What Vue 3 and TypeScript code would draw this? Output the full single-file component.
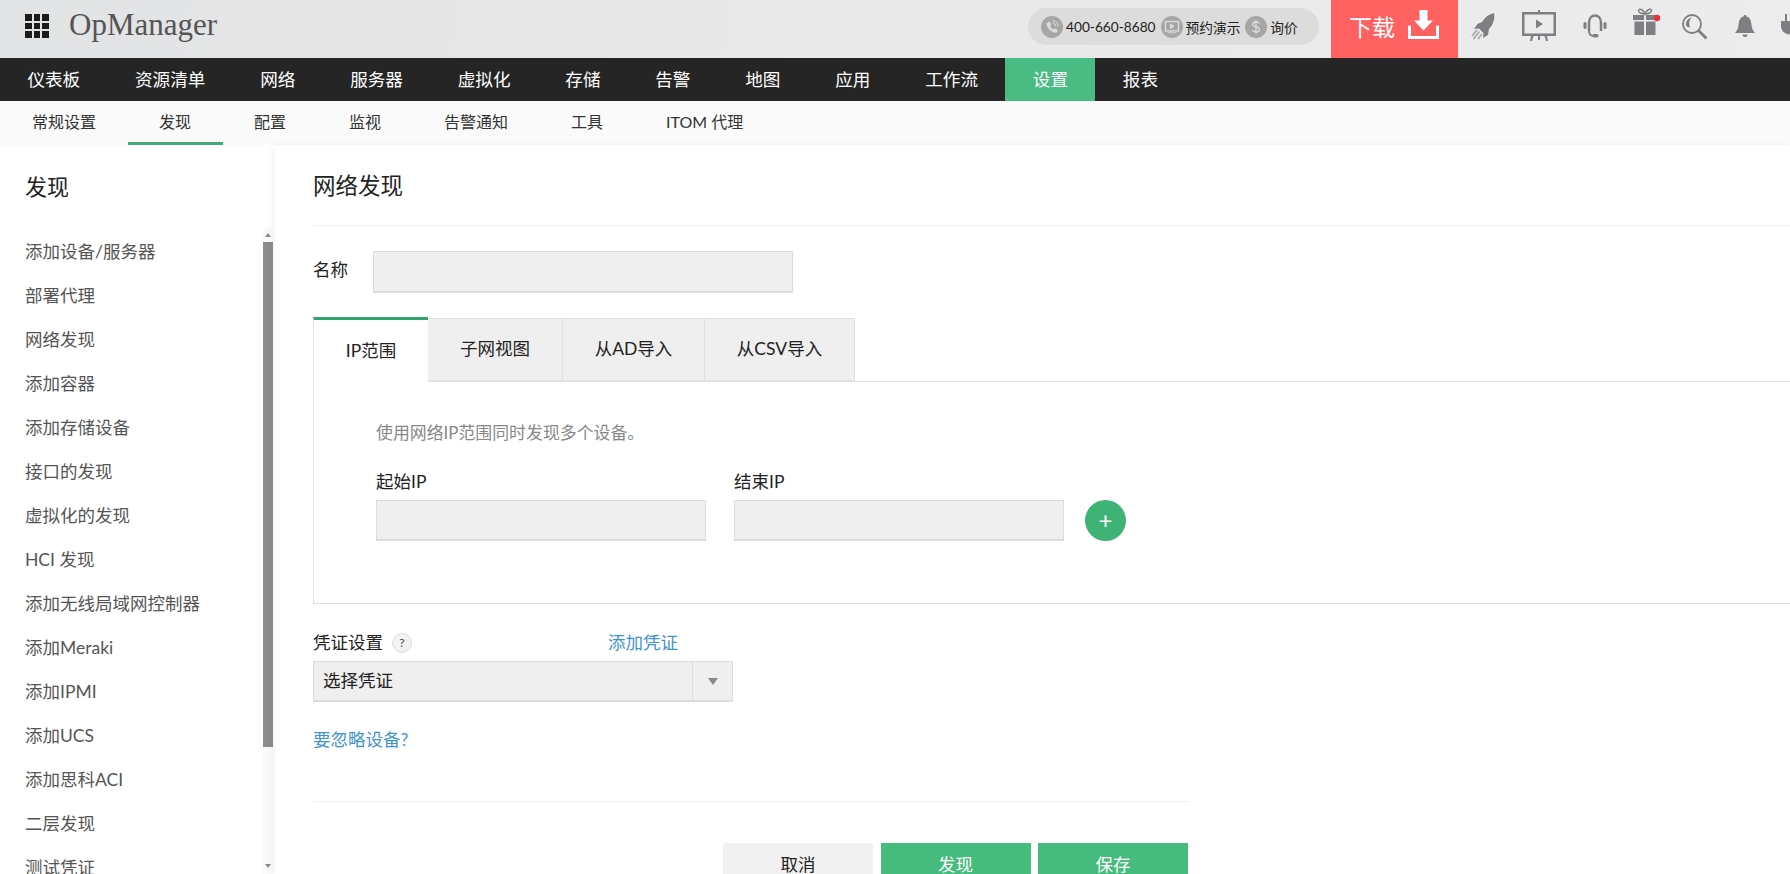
<style>
html, body {
  margin: 0;
  padding: 0;
  overflow: hidden;
  background: #fff;
}
</style>

<style scoped>
.app {
  width: 1790px;
  height: 874px;
  overflow: hidden;
  display: flex;
  flex-direction: column;
  font-family: Lato, "Noto Sans CJK SC", sans-serif;
  font-size: 17.5px;
  color: #222;
  background: #fff;
}

/* === Top bar === */
.topbar {
  height: 58px;
  flex: none;
  display: flex;
  align-items: center;
  background: linear-gradient(100deg, #e2e3e4, #e8e8e9 40%, #ececec);
}
.apps-grid {
  margin: 0 0 6px 25px;
  width: 24px;
  height: 24px;
  display: grid;
  grid-template-columns: repeat(3, 1fr);
  grid-template-rows: repeat(3, 1fr);
  gap: 2px;
}
.apps-grid i {
  background: #1c1c1c;
}
.logo {
  margin: 0 0 9px 20px;
  font-family: "Liberation Serif", serif;
  font-size: 31px;
  color: #555;
}
.contact {
  margin: 0 0 5px auto;
  height: 37px;
  width: 291px;
  box-sizing: border-box;
  padding-left: 13px;
  border-radius: 19px;
  background: #dcdcdc;
  display: flex;
  align-items: center;
  font-size: 13.7px;
  color: #222;
}
.contact svg {
  width: 22px;
  height: 22px;
  flex: none;
  margin-right: 3px;
}
.contact span {
  margin-right: 5px;
}
.download {
  margin-left: 12px;
  width: 127px;
  height: 58px;
  flex: none;
  background: #ff6161;
  color: #fff;
  font-size: 23px;
  display: flex;
  align-items: center;
  box-sizing: border-box;
  padding: 0 0 6px 18px;
}
.download svg {
  margin: 0 0 3px 13px;
}
.tools {
  width: 332px;
  flex: none;
  height: 58px;
  position: relative;
  overflow: hidden;
}
.tools svg {
  position: absolute;
  fill: #7d7f82;
}
.ic-rocket { left: 13px; top: 13px; }
.ic-screen { left: 64px; top: 10px; }
.ic-headset { left: 125px; top: 14px; }
.ic-gift { left: 175px; top: 8px; }
.ic-search { left: 224px; top: 14px; }
.ic-bell { left: 277px; top: 14px; }
.ic-plug { left: 323px; top: 14px; }

/* === Main nav === */
.mainnav {
  height: 43px;
  flex: none;
  display: flex;
  background: #252525;
  color: #fff;
}
.mainnav a {
  padding: 0 27.4px;
  line-height: 43px;
  font-size: 17.6px;
}
.mainnav a.active {
  background: #4abb82;
}

/* === Sub nav === */
.subnav {
  height: 44px;
  flex: none;
  box-sizing: border-box;
  display: flex;
  padding-left: 0.5px;
  background: #fafafa;
  font-size: 16px;
  color: #333;
}
.subnav a {
  padding: 0 31.5px;
  line-height: 41px;
  border-bottom: 3px solid transparent;
}
.subnav a.active {
  border-bottom-color: #45a97a;
}

/* === Body === */
.content {
  flex: 1;
  display: flex;
  min-height: 0;
}
.sidebar {
  width: 275px;
  flex: none;
  position: relative;
  background: #fff;
}
.side-title {
  height: 85px;
  padding-left: 25px;
  line-height: 84px;
  font-size: 22px;
  color: #222;
}
.side-row {
  height: 44px;
  line-height: 44px;
  padding-left: 25px;
  color: #555;
  white-space: nowrap;
}

/* Fake scrollbar, lies over the list */
.scroll-track {
  position: absolute;
  left: 263px;
  top: 83px;
  width: 10px;
  height: 646px;
  background: #fafafa;
}
.scroll-thumb {
  position: absolute;
  left: 0;
  top: 14px;
  width: 10px;
  height: 505px;
  background: #8c8c8c;
}
.scroll-up,
.scroll-down {
  position: absolute;
  left: 2px;
  width: 0;
  height: 0;
  border-left: 3px solid transparent;
  border-right: 3px solid transparent;
}
.scroll-up {
  top: 5px;
  border-bottom: 4px solid #8c8c8c;
}
.scroll-down {
  bottom: 6px;
  border-top: 4px solid #8c8c8c;
}

.main {
  flex: 1;
  min-width: 0;
  padding-left: 38px;
  background: #fff;
  box-shadow: -4px 0 7px rgba(0, 0, 0, .04);
  position: relative;
}
.page-title {
  height: 80px;
  line-height: 82px;
  font-size: 22.5px;
  border-bottom: 1px solid #eee;
}
.name-row {
  margin-top: 25px;
  display: flex;
  align-items: flex-start;
}
.name-row label {
  width: 60px;
  line-height: 38px;
}
.field {
  display: block;
  box-sizing: border-box;
  height: 42px;
  background: #efefef;
  border: 1px solid #dcdcdc;
  border-bottom-width: 2px;
  border-radius: 0;
  outline: none;
}
.name-row .field {
  width: 420px;
}

.tabs {
  margin-top: 24px;
  display: flex;
  align-items: flex-end;
  height: 64px;
  position: relative;
  z-index: 1;
}
.tab {
  box-sizing: border-box;
  height: 63px;
  text-align: center;
  line-height: 60px;
  background: #efefef;
  border: 1px solid #e0e0e0;
  border-left-width: 0;
  white-space: nowrap;
}
.tab.active {
  height: 65px;
  margin-bottom: -1px;
  line-height: 62px;
  background: #fff;
  border: 0;
  border-left: 1px solid #e0e0e0;
  border-top: 3px solid #2fa56d;
}
.panel {
  box-sizing: border-box;
  height: 223px;
  padding: 39px 0 0 62px;
  border: 1px solid #e0e0e0;
  border-right: 0;
}
.hint {
  line-height: 24px;
  color: #888;
  font-size: 16.9px;
}
.ip-row {
  margin-top: 25px;
  display: flex;
  align-items: flex-end;
}
.ip-col {
  width: 330px;
  margin-right: 28px;
}
.ip-col label {
  display: block;
  line-height: 24px;
  margin-bottom: 6px;
}
.ip-col .field {
  width: 330px;
  height: 41px;
}
.add-btn {
  width: 41px;
  height: 41px;
  margin-left: -7px;
  border-radius: 50%;
  background: #3fb275;
  color: #fff;
  font-size: 24px;
  line-height: 39px;
  text-align: center;
}

.cred-head {
  margin-top: 27px;
  width: 365px;
  height: 24px;
  line-height: 24px;
  display: flex;
  justify-content: space-between;
}
.cred-label {
  display: flex;
  align-items: center;
}
.help {
  width: 18px;
  height: 18px;
  margin-left: 9px;
  border: 1px solid #ddd;
  border-radius: 50%;
  background: #f2f2f2;
  font-size: 12px;
  line-height: 18px;
  text-align: center;
  color: #444;
}
.link {
  color: #3f94cc;
}
.select {
  margin-top: 6px;
  box-sizing: border-box;
  width: 420px;
  height: 41px;
  display: flex;
  line-height: 37px;
  background: #efefef;
  border: 1px solid #dcdcdc;
  border-bottom-width: 2px;
}
.select-value {
  flex: 1;
  padding-left: 9px;
}
.select-arrow {
  width: 39px;
  border-left: 1px solid #dcdcdc;
  display: flex;
  align-items: center;
  justify-content: center;
}
.select-arrow::before {
  content: '';
  border-left: 5px solid transparent;
  border-right: 5px solid transparent;
  border-top: 7px solid #888;
}
.ignore {
  display: block;
  margin-top: 26px;
  line-height: 24px;
}
.actions {
  margin-top: 49px;
  width: 875px;
  box-sizing: border-box;
  padding-top: 41px;
  border-top: 1px solid #eee;
  display: flex;
  justify-content: flex-end;
  gap: 7.5px;
}
.btn {
  width: 150px;
  height: 44px;
  line-height: 44px;
  text-align: center;
  color: #fff;
  background: #45bb7e;
}
.btn.cancel {
  background: #f1f1f1;
  color: #222;
}
</style>

<template>
  <div class="app">
    <!-- Top bar: logo, contact pill, download, tool icons -->
    <header class="topbar">
      <div class="apps-grid"><i v-for="n in 9" :key="n" /></div>
      <div class="logo">OpManager</div>

      <div class="contact">
        <svg viewBox="0 0 22 22">
          <circle cx="11" cy="11" r="11" fill="#a6a6a6" />
          <path d="M6.5 6.5c1-1 2-1 2.6 0l.8 1.6c.3.6.1 1-.4 1.5l-.5.5c.5 1.5 2 3 3.4 3.4l.6-.6c.5-.5 1-.6 1.5-.3l1.5.9c.8.5.8 1.5 0 2.4-1 1-2.4 1-4 .2-3-1.4-5-3.6-6-6.2-.5-1.4-.4-2.6.5-3.4z" fill="#dcdcdc" />
          <path d="M11.5 7a4 4 0 0 1 3.5 3.5M11.8 4.8a6 6 0 0 1 5.4 5.4" stroke="#dcdcdc" stroke-width="1" fill="none" />
        </svg>
        <span>400-660-8680</span>
        <svg viewBox="0 0 22 22">
          <circle cx="11" cy="11" r="11" fill="#a6a6a6" />
          <rect x="4.5" y="5.5" width="13" height="9.5" fill="none" stroke="#dcdcdc" stroke-width="1.4" />
          <path d="M9.5 8v4.5l3.5-2.25zM7 16.800h8" stroke="#dcdcdc" fill="#dcdcdc" />
        </svg>
        <span>预约演示</span>
        <svg viewBox="0 0 22 22">
          <circle cx="11" cy="11" r="11" fill="#a6a6a6" />
          <path d="M14.5 7.800c-.6-1.3-1.9-1.8-3.5-1.8-1.9 0-3.3 1-3.3 2.5 0 3.3 6.8 1.7 6.8 5 0 1.5-1.5 2.5-3.5 2.5-1.7 0-3-.7-3.600-2M11 4v14" stroke="#dcdcdc" stroke-width="1.3" fill="none" />
        </svg>
        <span>询价</span>
      </div>

      <div class="download">
        下载
        <svg width="31" height="29" viewBox="0 0 31 29">
          <path d="M11.5 0h8v10.5h5.5L15.5 20.5 6 10.5h5.5z" fill="#fff" />
          <path d="M1.5 15.5v12h28v-12" fill="none" stroke="#fff" stroke-width="3" />
        </svg>
      </div>

      <div class="tools">
        <svg class="ic-rocket" width="24" height="27" viewBox="0 0 24 27">
          <path d="M23 0c1 6-1 12-5 16l-1 6-5 3 .5-5L8 15.5 3 16l3.500-5 4.500-2C14 4 18 1 23 0z" />
          <path d="M6 17l-5 6M8.500 18.500L2.500 26M11 21l-4 5" fill="none" stroke="#a2a3a5" stroke-width="1.5" />
        </svg>
        <svg class="ic-screen" width="34" height="31" viewBox="0 0 34 31">
          <path d="M16 0h2v2h16v24H0V2h16zM2.500 4.500v19h29v-19z" />
          <path d="M14 9.5v9l7-4.500zM9 26h2.500L10 31H8zM16 26h2v4h-2zM22.500 26H25l1 5h-2z" />
        </svg>
        <svg class="ic-headset" width="24" height="25" viewBox="0 0 24 25">
          <path d="M6 17V9C6 4 9 1.500 12 1.500S18 4 18 9v8" fill="none" stroke="#7d7f82" stroke-width="2.5" />
          <rect x="0.5" y="8" width="3" height="7" rx="1.5" />
          <rect x="20.5" y="8" width="3" height="7" rx="1.5" />
          <path d="M6 17c0 2.500 1 4.500 4 4.800" fill="none" stroke="#7d7f82" stroke-width="2" />
          <rect x="9.500" y="20" width="6" height="3.500" rx="1.700" />
        </svg>
        <svg class="ic-gift" width="28" height="27" viewBox="0 0 28 27">
          <path d="M0 7h11v5H0zM13 7h11v5H13zM1.5 13.5H11V27H1.5zM13 13.5h9.5V27H13z" />
          <path d="M12 6C9 6 5 4.5 5.5 2.500S10 .5 12 6c2-5.500 6-5.500 6.500-3.500S15 6 12 6z" fill="none" stroke="#7d7f82" stroke-width="1.5" />
          <circle cx="24" cy="10" r="3.200" fill="#f0303c" />
        </svg>
        <svg class="ic-search" width="26" height="26" viewBox="0 0 26 26">
          <circle cx="10" cy="10" r="9" fill="none" stroke="#7d7f82" stroke-width="1.8" />
          <path d="M4 11C3.500 7.500 6 4 10 3.500 7.500 5.500 6.500 8.500 8 13c-1.500.5-3.500 0-4-2z" />
          <path d="M16 16l8.500 8.500" stroke="#7d7f82" stroke-width="2.8" />
        </svg>
        <svg class="ic-bell" width="20" height="24" viewBox="0 0 20 24">
          <path d="M8.5 2.500c0-2 3-2 3 0C15 3.500 16 6.500 16.500 11c.4 3.500 1.500 5.500 3.500 8H0c2-2.500 3.100-4.500 3.500-8C4 6.500 5 3.500 8.500 2.500z" />
          <path d="M7.500 20.500h5a2.500 2.500 0 0 1-5 0z" />
        </svg>
        <svg class="ic-plug" width="20" height="22" viewBox="0 0 20 22">
          <path d="M4 0h2v7H4zM14 0h2v7h-2zM0 7h20v5c0 5-4 8-9 8.500V22H9v-1.500C4 20 0 17 0 12z" />
        </svg>
      </div>
    </header>

    <!-- Main navigation -->
    <nav class="mainnav">
      <a v-for="item in mainNav" :key="item" :class="{ active: item === '设置' }">{{ item }}</a>
    </nav>

    <!-- Second level navigation -->
    <nav class="subnav">
      <a v-for="item in subNav" :key="item" :class="{ active: item === '发现' }">{{ item }}</a>
    </nav>

    <div class="content">
      <aside class="sidebar">
        <div class="side-title">发现</div>
        <div v-for="row in sideRows" :key="row" class="side-row">{{ row }}</div>
        <div class="scroll-track">
          <div class="scroll-up" />
          <div class="scroll-thumb" />
          <div class="scroll-down" />
        </div>
      </aside>

      <main class="main">
        <div class="page-title">网络发现</div>

        <div class="name-row">
          <label>名称</label>
          <input class="field" type="text" />
        </div>

        <div class="tabs">
          <div
            v-for="(tab, i) in tabs"
            :key="tab.label"
            class="tab"
            :class="{ active: i === 0 }"
            :style="{ width: tab.width + 'px' }"
          >{{ tab.label }}</div>
        </div>

        <section class="panel">
          <div class="hint">使用网络IP范围同时发现多个设备。</div>
          <div class="ip-row">
            <div class="ip-col">
              <label>起始IP</label>
              <input class="field" type="text" />
            </div>
            <div class="ip-col">
              <label>结束IP</label>
              <input class="field" type="text" />
            </div>
            <div class="add-btn">+</div>
          </div>
        </section>

        <div class="cred-head">
          <div class="cred-label">凭证设置<span class="help">?</span></div>
          <a class="link">添加凭证</a>
        </div>
        <div class="select">
          <div class="select-value">选择凭证</div>
          <div class="select-arrow" />
        </div>

        <a class="link ignore">要忽略设备?</a>

        <div class="actions">
          <div class="btn cancel">取消</div>
          <div class="btn">发现</div>
          <div class="btn">保存</div>
        </div>
      </main>
    </div>
  </div>
</template>

<script setup lang="ts">
const mainNav: string[] = ['仪表板', '资源清单', '网络', '服务器', '虚拟化', '存储', '告警', '地图', '应用', '工作流', '设置', '报表']

const subNav: string[] = ['常规设置', '发现', '配置', '监视', '告警通知', '工具', 'ITOM 代理']

const sideRows: string[] = [
  '添加设备/服务器',
  '部署代理',
  '网络发现',
  '添加容器',
  '添加存储设备',
  '接口的发现',
  '虚拟化的发现',
  'HCI 发现',
  '添加无线局域网控制器',
  '添加Meraki',
  '添加IPMI',
  '添加UCS',
  '添加思科ACI',
  '二层发现',
  '测试凭证',
]

const tabs: { label: string; width: number }[] = [
  { label: 'IP范围', width: 115 },
  { label: '子网视图', width: 135 },
  { label: '从AD导入', width: 142 },
  { label: '从CSV导入', width: 150 },
]
</script>
